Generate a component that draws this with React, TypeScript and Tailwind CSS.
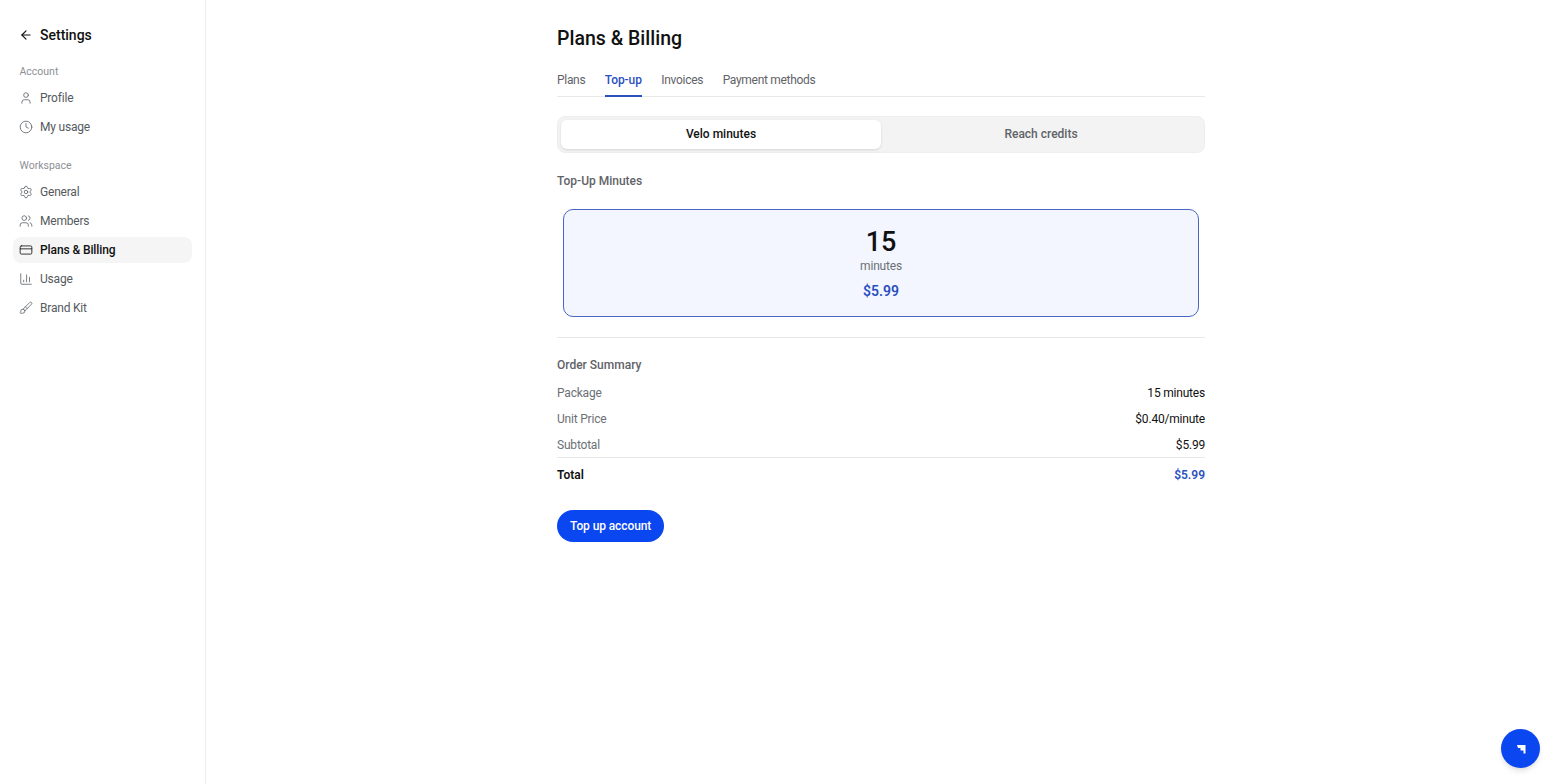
import { ArrowLeft, BarChart3, Brush, Clock, CreditCard, Settings, User, Users } from "lucide-react";

const accountItems = [
  { label: "Profile", icon: User },
  { label: "My usage", icon: Clock },
];

const workspaceItems = [
  { label: "General", icon: Settings },
  { label: "Members", icon: Users },
  { label: "Plans & Billing", icon: CreditCard, active: true },
  { label: "Usage", icon: BarChart3 },
  { label: "Brand Kit", icon: Brush },
];

const tabs = ["Plans", "Top-up", "Invoices", "Payment methods"];

const summaryRows = [
  { label: "Package", value: "15 minutes" },
  { label: "Unit Price", value: "$0.40/minute" },
  { label: "Subtotal", value: "$5.99" },
];

function NavItem({ label, icon: Icon, active }: { label: string; icon: typeof User; active?: boolean }) {
  return (
    <div
      className={`flex h-[26px] items-center gap-[7px] rounded-lg px-[6px] pb-[1px] text-[12px] ${
        active ? "bg-[#f5f5f5] font-medium tracking-[-0.1px] text-[#111111]" : "tracking-[-0.2px] text-[#555a60]"
      }`}
    >
      <Icon size={14} strokeWidth={1.4} className={active ? "text-[#111111]" : "text-[#5f6368]"} />
      <span>{label}</span>
    </div>
  );
}

function Sidebar() {
  return (
    <aside className="w-[206px] shrink-0 border-r border-[#ececec] px-[13px] pt-[25px]">
      <div className="flex h-[20px] items-center gap-[7px] px-[6px] text-[#111111]">
        <ArrowLeft size={14} strokeWidth={2} />
        <span className="text-[14px] font-medium">Settings</span>
      </div>
      <div className="mt-[18px] flex h-[18px] items-center px-[6.5px] text-[10.5px] text-[#8c9096]">Account</div>
      <div className="mt-[4px] flex flex-col gap-[3px]">
        {accountItems.map((item) => (
          <NavItem key={item.label} {...item} />
        ))}
      </div>
      <div className="mt-[17px] flex h-[18px] items-center px-[6.5px] text-[10.5px] text-[#8c9096]">Workspace</div>
      <div className="mt-[4px] flex flex-col gap-[3px]">
        {workspaceItems.map((item) => (
          <NavItem key={item.label} {...item} />
        ))}
      </div>
    </aside>
  );
}

function TopUp() {
  return (
    <main className="flex-1">
      <div className="mx-auto w-[648px] pt-[26px]">
        <h1 className="h-[26px] text-[19.5px] leading-[26px] font-medium text-[#111111]">Plans & Billing</h1>

        <div className="mt-[14px] flex h-[31px] gap-[19.5px] border-b border-[#e8e8e8]">
          {tabs.map((tab) => (
            <div
              key={tab}
              className={`-mb-px flex h-[31px] items-center border-b-2 pb-[2px] text-[12px] ${
                tab === "Top-up"
                  ? "border-[#2b50c0] font-medium tracking-[-0.1px] text-[#2b50c0]"
                  : "border-transparent tracking-[-0.3px] text-[#5f6368]"
              }`}
            >
              {tab}
            </div>
          ))}
        </div>

        <div className="mt-[19px] grid h-[37px] grid-cols-2 rounded-lg border border-[#eeeeee] bg-[#f3f3f3] p-[3px] text-[12px] font-medium">
          <div className="flex items-center justify-center rounded-md bg-white pb-[1px] text-[#111111] shadow-sm">Velo minutes</div>
          <div className="flex items-center justify-center pb-[1px] text-[#5f6368]">Reach credits</div>
        </div>

        <h2 className="mt-[19px] text-[12px] leading-[18px] font-medium text-[#5f6368]">Top-Up Minutes</h2>

        <div className="mx-[6px] mt-[19px] flex h-[108px] flex-col items-center rounded-[10px] border border-[#4a67c4] bg-[#f3f6fe] pt-[17px]">
          <div className="text-[27px] leading-[30px] font-medium text-[#111111]">15</div>
          <div className="text-[12px] leading-[18px] tracking-[-0.2px] text-[#6b7075]">minutes</div>
          <div className="mt-[6px] text-[14px] leading-[20px] font-semibold text-[#2b50c0]">$5.99</div>
        </div>

        <div className="mt-[20px] border-t border-[#e8e8e8] pt-[18px]">
          <h2 className="text-[12px] leading-[18px] font-medium text-[#5f6368]">Order Summary</h2>
          <div className="mt-[10px] flex flex-col gap-[8px]">
            {summaryRows.map((row) => (
              <div key={row.label} className="flex h-[18px] items-center justify-between pb-[1px] text-[12px] tracking-[-0.2px]">
                <span className="text-[#6b7075]">{row.label}</span>
                <span className="text-[#111111]">{row.value}</span>
              </div>
            ))}
          </div>
          <div className="mt-[3px] flex h-[34px] items-center justify-between border-t border-[#e8e8e8] text-[12px] font-semibold">
            <span className="text-[#111111]">Total</span>
            <span className="text-[#2b50c0]">$5.99</span>
          </div>
        </div>

        <button className="mt-[19px] h-[32px] rounded-full bg-[#0a47f0] px-[13px] text-[12px] font-medium tracking-[-0.1px] text-white">
          Top up account
        </button>
      </div>
    </main>
  );
}

export default function App() {
  return (
    <div className="relative flex h-[784px] bg-white font-['Roboto',sans-serif]">
      <Sidebar />
      <TopUp />
      <button className="absolute right-[16px] bottom-[16px] flex h-[39px] w-[39px] items-center justify-center rounded-full bg-[#0a47f0] shadow-md">
        <svg width="10" height="10" viewBox="0 0 10 10" fill="white">
          <path d="M1 1H9.5V9.5H7.5V6.5H4.5V4H2z" />
        </svg>
      </button>
    </div>
  );
}
